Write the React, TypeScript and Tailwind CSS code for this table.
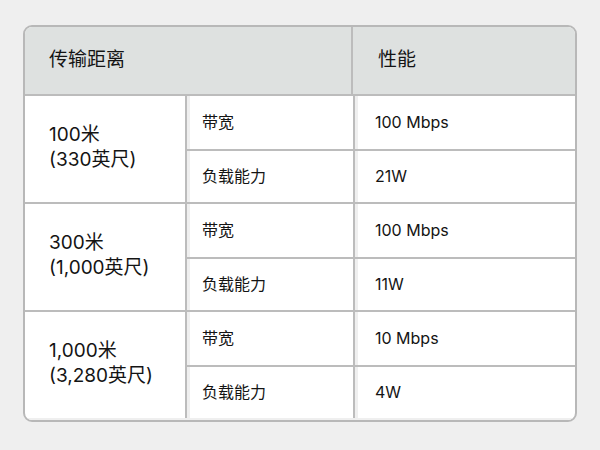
const font = { fontFamily: 'Inter, "Noto Sans CJK SC", sans-serif' };

const groups = [
  { dist: "100米", feet: "(330英尺)", bw: "100 Mbps", load: "21W" },
  { dist: "300米", feet: "(1,000英尺)", bw: "100 Mbps", load: "11W" },
  { dist: "1,000米", feet: "(3,280英尺)", bw: "10 Mbps", load: "4W" },
];

function Row({ label, value, last, h }: { label: string; value: string; last?: boolean; h: string }) {
  return (
    <div className={`flex ${h} ${last ? "" : "border-b-2 border-[#bcbcbc]"}`}>
      <div className="w-[166px] flex items-center border-l-[3px] border-[#efefef] pl-3 text-[16px] pb-[1px]">
        {label}
      </div>
      <div className="w-[2px] bg-[#bcbcbc]" />
      <div className="flex-1 flex items-center border-l-[3px] border-[#efefef] pl-[17px] text-[16px] pb-[1px]">
        {value}
      </div>
    </div>
  );
}

export default function App() {
  return (
    <div className="w-[600px] h-[450px] bg-[#efefef] pt-[25px] pl-[23px] text-[#141414]" style={font}>
      <div className="w-[554px] border-2 border-[#b8b8b8] rounded-[9px] overflow-hidden bg-white">
        <div className="flex h-[69px] bg-[#dee1e0] border-b-2 border-[#bcbcbc]">
          <div className="w-[326px] flex items-center pl-6 text-[19px]">传输距离</div>
          <div className="w-[2px] bg-[#bcbcbc]" />
          <div className="flex-1 flex items-center pl-[25px] text-[19px]">性能</div>
        </div>
        {groups.map((g, i) => {
          const last = i === groups.length - 1;
          return (
            <div key={g.dist} className={`flex ${last ? "border-b-2 border-[#efefef]" : "border-b-2 border-[#bcbcbc]"}`}>
              <div className="w-[160px] flex flex-col justify-center pl-6 pb-1 text-[19px] leading-[25px]">
                <div>{g.dist}</div>
                <div>{g.feet}</div>
              </div>
              <div className="w-[2px] bg-[#bcbcbc]" />
              <div className="flex-1 flex flex-col">
                <Row label="带宽" value={g.bw} h="h-[55px]" />
                <Row label="负载能力" value={g.load} h="h-[51px]" last />
              </div>
            </div>
          );
        })}
      </div>
    </div>
  );
}
